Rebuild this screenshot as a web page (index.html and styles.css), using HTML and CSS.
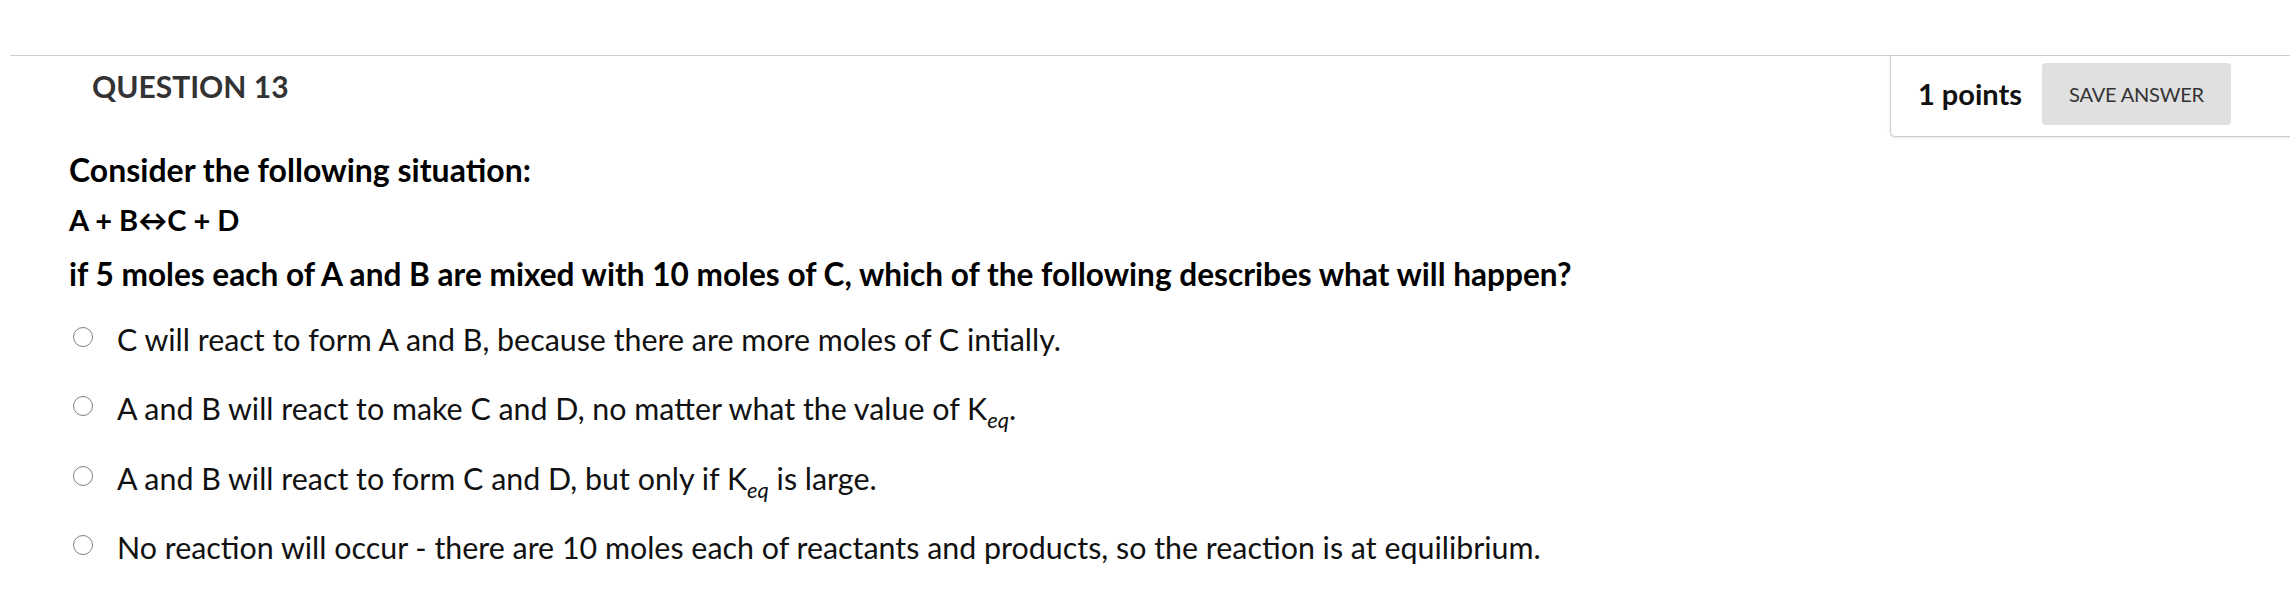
FILE: index.html
```html
<!DOCTYPE html>
<html>
<head>
<meta charset="utf-8">
<link rel="stylesheet" href="styles.css">
</head>
<body>
<div class="page">
  <div class="q-header">
    <h2 class="q-title">QUESTION 13</h2>
    <div class="points-box">
      <span class="points">1 points</span>
      <button class="save-btn">SAVE ANSWER</button>
    </div>
  </div>
  <div class="q-body">
    <p class="stem">Consider the following situation:</p>
    <p class="stem eq">A + B↔C + D</p>
    <p class="stem ask">if 5 moles each of A and B are mixed with 10 moles of C, which of the following describes what will happen?</p>
    <ul class="options">
      <li class="option"><span class="radio"></span><span class="opt-text">C will react to form A and B, because there are more moles of C intially.</span></li>
      <li class="option"><span class="radio"></span><span class="opt-text">A and B will react to make C and D, no matter what the value of K<sub class="sub">eq</sub>.</span></li>
      <li class="option"><span class="radio"></span><span class="opt-text">A and B will react to form C and D, but only if K<sub class="sub">eq</sub> is large.</span></li>
      <li class="option"><span class="radio"></span><span class="opt-text">No reaction will occur - there are 10 moles each of reactants and products, so the reaction is at equilibrium.</span></li>
    </ul>
  </div>
</div>
</body>
</html>
```

FILE: styles.css
```css
html, body {
  margin: 0;
  padding: 0;
  background: #ffffff;
}
body {
  font-family: Lato, "Liberation Sans", sans-serif;
  color: #111111;
}
.page {
  margin-top: 55px;
  margin-left: 10px;
  border-top: 1px solid #cfcfcf;
}
.q-header {
  display: flex;
  justify-content: space-between;
  align-items: flex-start;
}
.q-title {
  margin: 0;
  padding: 15px 0 0 82px;
  font-size: 30px;
  line-height: 30px;
  font-weight: 700;
  color: #333333;
}
.points-box {
  display: flex;
  align-items: center;
  gap: 20px;
  height: 81px;
  box-sizing: border-box;
  padding: 7px 59px 12px 27px;
  border-left: 1px solid #cccccc;
  border-bottom: 1px solid #cccccc;
  border-bottom-left-radius: 5px;
  box-shadow: 0 1px 3px rgba(0,0,0,0.10);
}
.points {
  font-size: 29px;
  font-weight: 700;
  color: #111111;
}
.save-btn {
  width: 189px;
  height: 62px;
  border: none;
  border-radius: 4px;
  background: #e0e0e0;
  color: #333333;
  font-family: Lato, "Liberation Sans", sans-serif;
  font-size: 20px;
  letter-spacing: -0.2px;
  padding: 0;
}
.q-body {
  padding-left: 59px;
  padding-top: 8px;
}
.stem {
  margin: 0;
  font-size: 32px;
  line-height: 50px;
  font-weight: 700;
  color: #000000;
}
.eq {
  font-size: 29px;
}
.ask {
  margin-top: 4px;
  font-size: 31.6px;
}
.options {
  list-style: none;
  margin: 0;
  padding: 21px 0 0 0;
}
.option {
  display: flex;
  align-items: flex-start;
  height: 69.33px;
}
.radio {
  display: block;
  box-sizing: border-box;
  margin: 7px 0 0 4px;
  width: 20px;
  height: 20px;
  border: 1.5px solid #7f7f7f;
  border-radius: 50%;
  background: #ffffff;
  flex: none;
}
.opt-text {
  margin: -3px 0 0 24px;
  font-size: 30.4px;
  line-height: 44px;
  color: #111111;
  white-space: nowrap;
}
.sub {
  font-style: italic;
  font-size: 22px;
  vertical-align: -8px;
  line-height: 0;
}
```
